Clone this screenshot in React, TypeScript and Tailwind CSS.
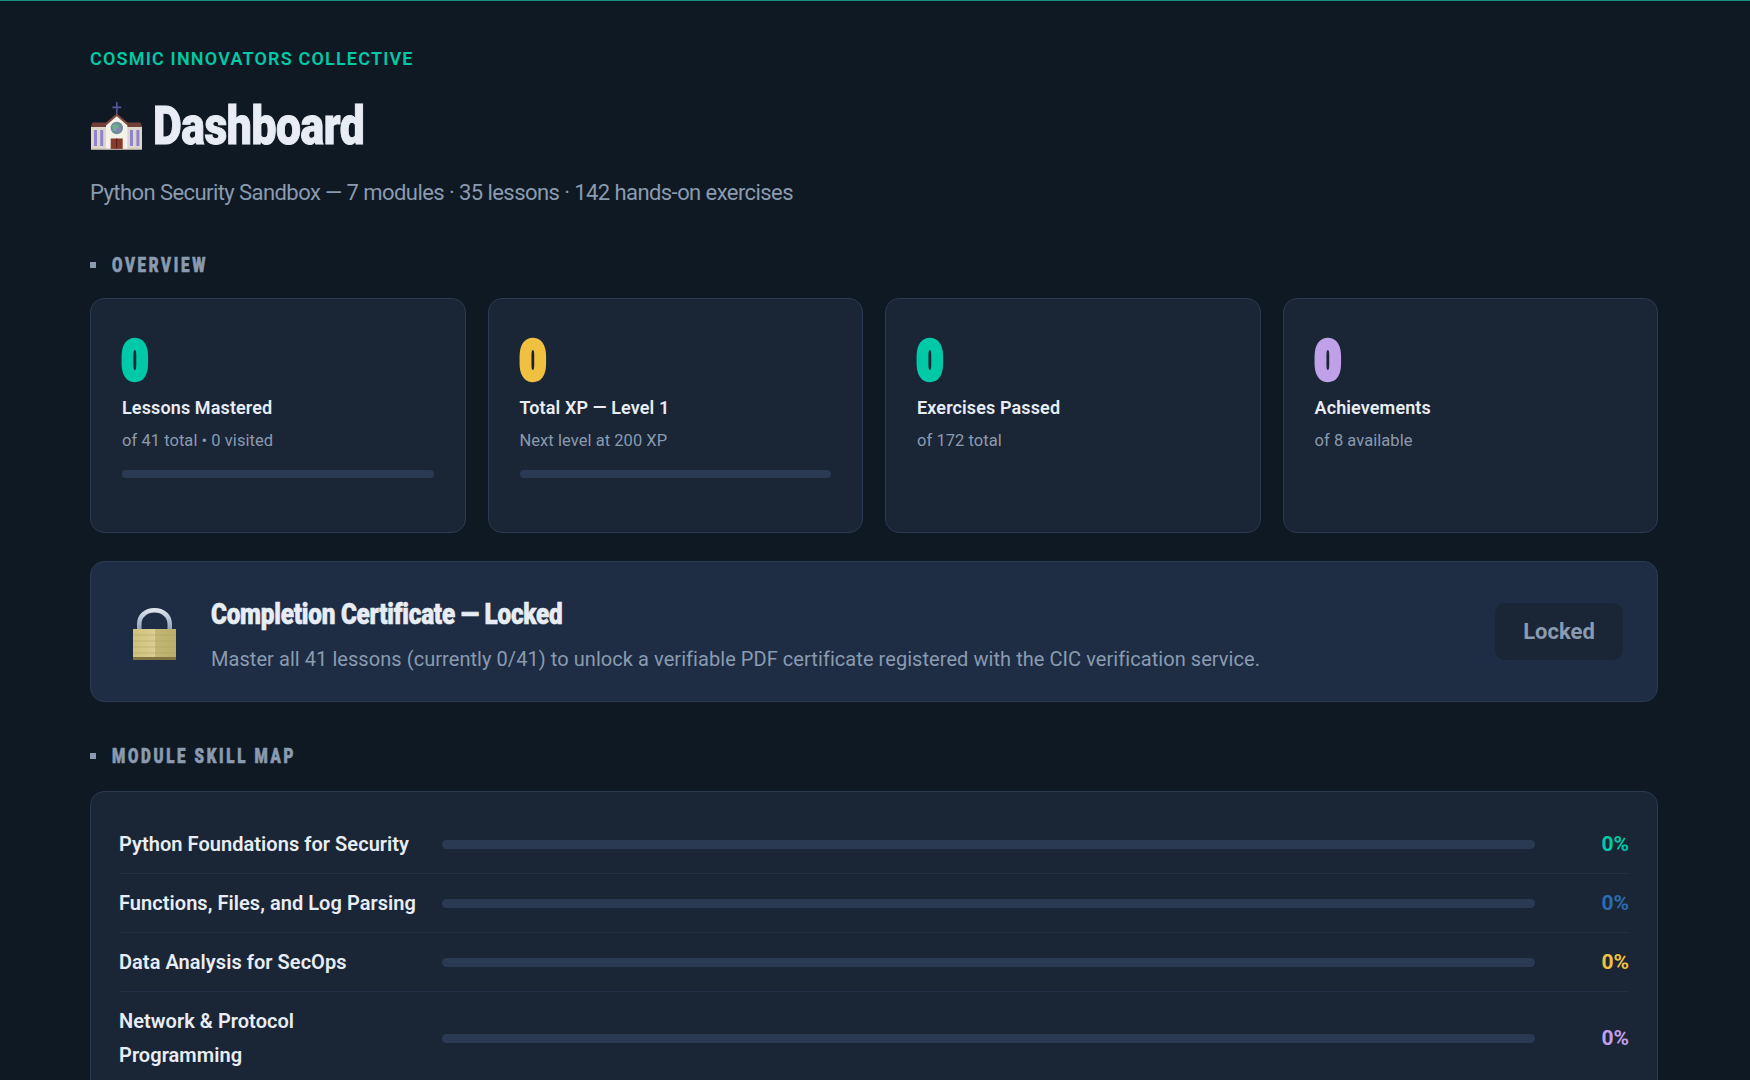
const bodyFont = "font-['Roboto','Liberation_Sans',sans-serif]"

function Church() {
  return (
    <svg viewBox="0 0 53 48" className="w-[53px] h-[48px] shrink-0" aria-hidden="true">
      <path d="M26 0h1.6v4.6h3.6v1.6h-3.6V13H26V6.2h-3.6V4.6H26z" fill="#56589c" />
      <rect x="1" y="25" width="15" height="22" fill="#ddd6ca" />
      <rect x="37" y="25" width="15" height="22" fill="#ddd6ca" />
      <path d="M0.7 25 2.5 20.5H16V25z" fill="#6f3f38" />
      <path d="M52.3 25 50.5 20.5H37V25z" fill="#6f3f38" />
      <path d="M26.8 13 16 22.5V47.5h21.4V22.5z" fill="#f4f0ea" />
      <path d="M26.8 11.5 14.5 22l1.6 1.4L26.8 14.2l10.7 9.2 1.6-1.4z" fill="#7a4a3e" />
      <circle cx="26.8" cy="26" r="6.2" fill="#6f8f96" />
      <circle cx="25.6" cy="25.6" r="3.4" fill="#6fae8e" />
      <circle cx="28.4" cy="27.4" r="2.2" fill="#8a7fc8" />
      <rect x="20.7" y="36.5" width="12" height="11" fill="#8a3a2a" />
      <rect x="26.2" y="36.5" width="1" height="11" fill="#46201a" />
      <rect x="4" y="28" width="3" height="16" fill="#8f84cc" />
      <rect x="10.2" y="28" width="3" height="16" fill="#8f84cc" />
      <rect x="40" y="28" width="3" height="16" fill="#8f84cc" />
      <rect x="46.4" y="28" width="3" height="16" fill="#8f84cc" />
      <rect x="1" y="46.8" width="51" height="1.2" fill="#a8a298" />
    </svg>
  )
}

function Padlock() {
  return (
    <svg viewBox="0 0 43 52" className="w-[43px] h-[52px]" aria-hidden="true">
      <defs>
        <linearGradient id="shackle" x1="0" y1="0" x2="0" y2="1">
          <stop offset="0" stopColor="#e4eaf0" />
          <stop offset="1" stopColor="#8da0bc" />
        </linearGradient>
        <linearGradient id="brass" x1="0" y1="0" x2="1" y2="0">
          <stop offset="0" stopColor="#cfc27c" />
          <stop offset="0.5" stopColor="#dacd90" />
          <stop offset="0.52" stopColor="#c4b774" />
          <stop offset="1" stopColor="#bbae6a" />
        </linearGradient>
      </defs>
      <path d="M4 22V16C4 6 12 0 21.500 0S39 6 39 16v6h-4.500V16c0-7-6-11.500-13-11.500S8.500 9 8.500 16v6z" fill="url(#shackle)" />
      <rect x="0" y="21" width="43" height="29" fill="url(#brass)" />
      <rect x="0" y="49" width="43" height="3" fill="#7d7240" />
      <path d="M0 27h43M0 33h43M0 39h43M0 45h43" stroke="#ad9f5c" strokeWidth="0.5" />
    </svg>
  )
}

function SectionTitle({ children }: { children: React.ReactNode }) {
  return (
    <div className="flex items-center gap-[16px] h-[22px]">
      <span className="w-[6px] h-[6px] bg-[#8a9bb0] shrink-0" />
      <h2 className="font-['Roboto',sans-serif] font-black text-[21px] leading-[22px] tracking-[3.7px] text-[#8a9bb0] uppercase origin-left scale-x-[0.72] whitespace-nowrap [-webkit-text-stroke:0.7px_#8a9bb0]">
        {children}
      </h2>
    </div>
  )
}

const cards = [
  { color: 'text-[#00c9a7] [-webkit-text-stroke:5.5px_#00c9a7]', title: 'Lessons Mastered', sub: 'of 41 total • 0 visited', bar: true },
  { color: 'text-[#f0c040] [-webkit-text-stroke:5.5px_#f0c040]', title: 'Total XP — Level 1', sub: 'Next level at 200 XP', bar: true },
  { color: 'text-[#00c9a7] [-webkit-text-stroke:5.5px_#00c9a7]', title: 'Exercises Passed', sub: 'of 172 total', bar: false },
  { color: 'text-[#c0a0e8] [-webkit-text-stroke:5.5px_#c0a0e8]', title: 'Achievements', sub: 'of 8 available', bar: false },
]

const skills = [
  { name: 'Python Foundations for Security', color: 'text-[#00c9a7]' },
  { name: 'Functions, Files, and Log Parsing', color: 'text-[#2b6cb0]' },
  { name: 'Data Analysis for SecOps', color: 'text-[#f0c040]' },
  { name: 'Network & Protocol Programming', color: 'text-[#c0a0e8]' },
]

export default function App() {
  return (
    <div className={`h-[1080px] overflow-hidden bg-[#0f1923] ${bodyFont}`}>
      <div className="h-px bg-[#1a9080]" />
      <main className="pl-[90px] pr-[92px]">
        <p className="mt-[47px] h-[22px] text-[18px] leading-[22px] font-semibold tracking-[1.18px] text-[#00c9a7] uppercase">
          Cosmic Innovators Collective
        </p>
        <div className="mt-[26px] h-[60px] flex items-center gap-[10px]">
          <Church />
          <h1 className="font-black text-[53.5px] leading-[60px] text-[#e8edf5] origin-left scale-x-[0.83] tracking-[-0.5px] [-webkit-text-stroke:1px_#e8edf5]">
            Dashboard
          </h1>
        </div>
        <p className="mt-[20px] h-[34px] text-[22px] leading-[34px] font-normal text-[#8a9bb0] tracking-[-0.57px]">
          Python Security Sandbox — 7 modules · 35 lessons · 142 hands-on exercises
        </p>

        <div className="mt-[44px]">
          <SectionTitle>Overview</SectionTitle>
        </div>
        <div className="mt-[22px] grid grid-cols-4 gap-[22px]">
          {cards.map((c) => (
            <div key={c.title} className="h-[235px] rounded-[14px] border border-[#2a3a52] bg-[#1a2535] px-[31px] pt-[37px]">
              <div className={`h-[50px] font-black text-[54px] leading-[50px] origin-left scale-x-[0.82] ${c.color}`}>0</div>
              <h3 className="mt-[8px] text-[18px] leading-[28px] font-semibold text-[#e8edf5] tracking-[0.12px]">{c.title}</h3>
              <p className="mt-[5px] text-[16.5px] leading-[28px] font-normal text-[#8a9bb0] tracking-[0.05px]">{c.sub}</p>
              {c.bar && <div className="mt-[15px] h-2 rounded-[4px] bg-[#2a3a52]" />}
            </div>
          ))}
        </div>

        <section className="mt-[28px] h-[141px] flex items-center rounded-[14px] border border-[#2a3a52] bg-[#1e2d44] pl-[42px] pr-[34px]">
          <div className="mt-[4px]">
            <Padlock />
          </div>
          <div className="ml-[35px] mt-[9px] flex-1">
            <h3 className="font-black text-[30px] leading-[34px] text-[#e8edf5] origin-left scale-x-[0.81] tracking-[-0.3px] [-webkit-text-stroke:0.6px_#e8edf5]">
              Completion Certificate — Locked
            </h3>
            <p className="mt-[11px] text-[20px] leading-[34px] font-normal text-[#8a9bb0] tracking-[0.06px]">
              Master all 41 lessons (currently 0/41) to unlock a verifiable PDF certificate registered with the CIC verification service.
            </p>
          </div>
          <button className="w-[128px] h-[57px] rounded-[10px] bg-[#1a2535] text-[#8a9bb0] text-[22px] font-bold">Locked</button>
        </section>

        <div className="mt-[43px]">
          <SectionTitle>Module Skill Map</SectionTitle>
        </div>
        <section className="mt-[24px] rounded-[14px] border border-[#2a3a52] bg-[#1a2535] px-[28px] pt-[23px] pb-[24px]">
          {skills.map((s, i) => (
            <div
              key={s.name}
              className={`grid grid-cols-[299px_1fr_70px] gap-x-[24px] items-center py-[12px] ${i < skills.length - 1 ? 'border-b border-[#223045]' : ''}`}
            >
              <span className="text-[20px] leading-[34px] font-semibold text-[#e8edf5] tracking-[0.05px]">{s.name}</span>
              <div className="h-[9px] rounded-full bg-[#2a3a52]" />
              <span className={`text-right text-[21px] leading-[34px] font-bold ${s.color}`}>0%</span>
            </div>
          ))}
        </section>
      </main>
    </div>
  )
}
